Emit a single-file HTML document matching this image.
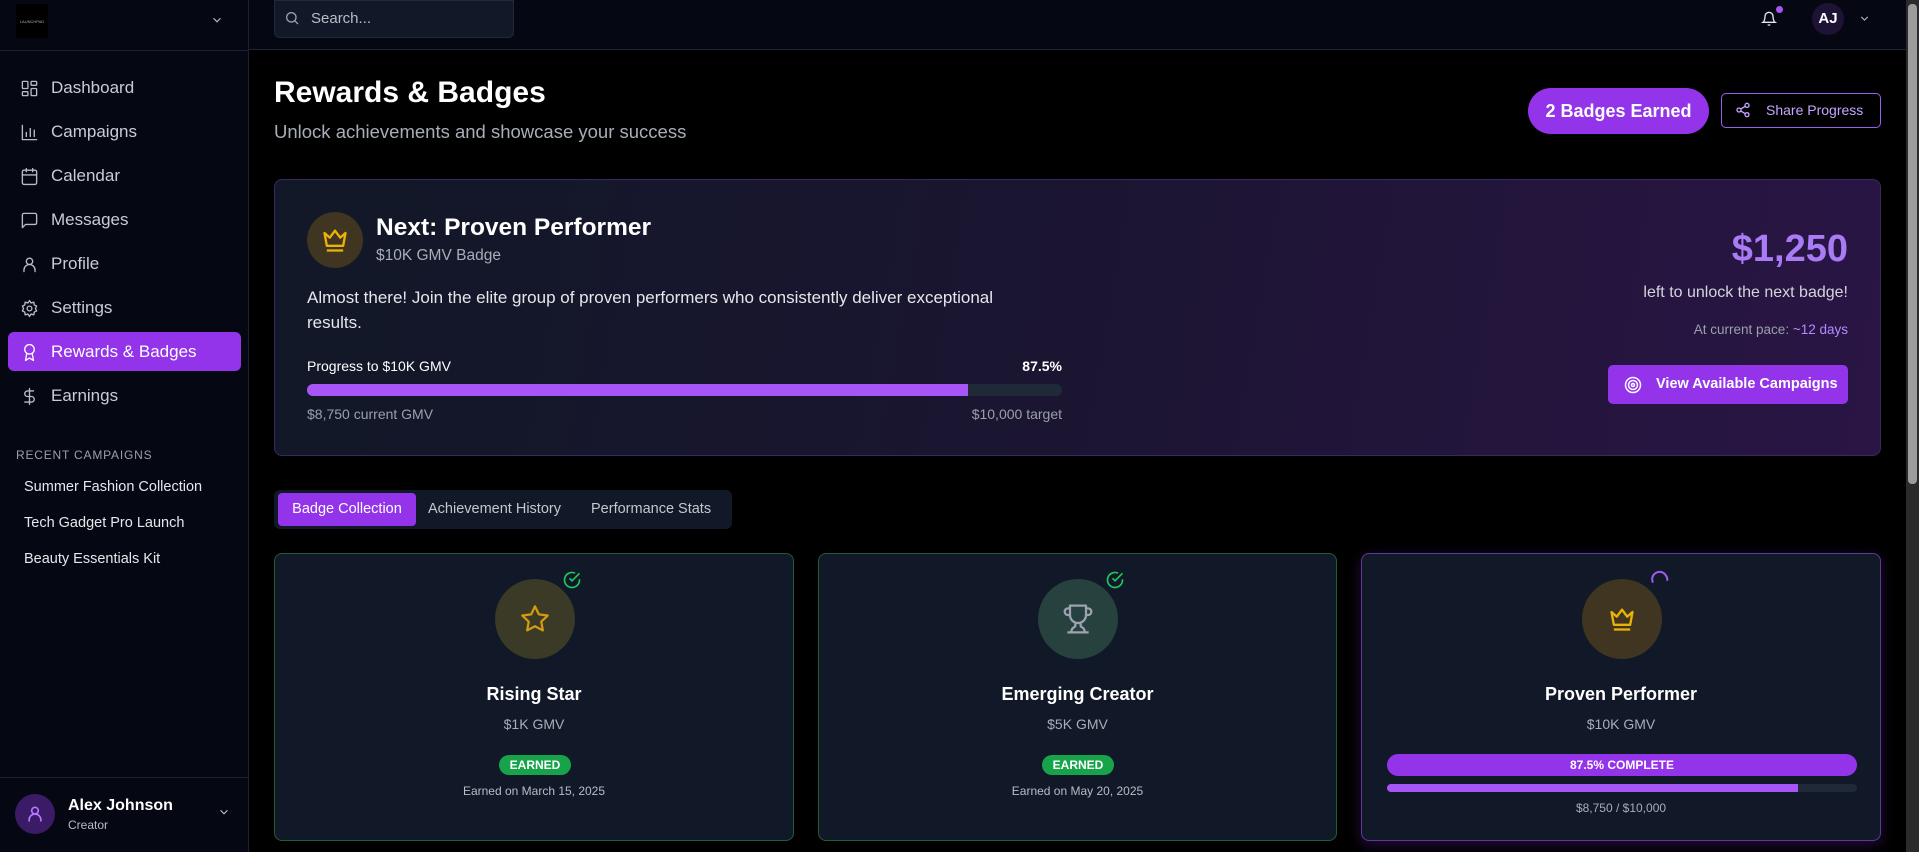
<!DOCTYPE html>
<html><head><meta charset="utf-8"><style>
*{box-sizing:border-box;margin:0;padding:0}
body{width:1919px;height:852px;overflow:hidden;background:#000;font-family:"Liberation Sans",sans-serif;color:#fff;position:relative}
.abs{position:absolute}
.side{left:0;top:0;width:249px;height:852px;background:#050812;border-right:1px solid #1c2130}
.nav{position:absolute;left:20px;display:flex;align-items:center;gap:12px;font-size:17px;color:#c9ccd4}
.nav svg{width:19px;height:19px;stroke:#b8bcc6;fill:none;stroke-width:1.7;stroke-linecap:round;stroke-linejoin:round}
.top{left:249px;top:0;width:1657px;height:50px;background:#050812;border-bottom:1px solid #1c2433}
.card{background:#111827;border:1px solid #1f5d36;border-radius:8px}
.t{position:absolute;white-space:nowrap}
.c{text-align:center;left:0;right:0}
</style></head><body>
<div class="abs side">
 <div class="abs" style="left:16px;top:4px;width:32px;height:34px;background:#000"><div style="font-size:4px;color:#aaa;margin-top:15px;text-align:center">LAUNCHPAD</div></div>
 <svg class="abs" style="left:210px;top:13px" width="14" height="14" viewBox="0 0 24 24" fill="none" stroke="#b8bcc6" stroke-width="2"><path d="M6 9l6 6 6-6"/></svg>
 <div class="abs" style="left:0;top:50px;width:249px;height:1px;background:#1c2130"></div>
 <div class="nav" style="top:78px"><svg viewBox="0 0 24 24"><rect x="3" y="3" width="7" height="9" rx="1"/><rect x="14" y="3" width="7" height="5" rx="1"/><rect x="14" y="12" width="7" height="9" rx="1"/><rect x="3" y="16" width="7" height="5" rx="1"/></svg>Dashboard</div>
 <div class="nav" style="top:122px"><svg viewBox="0 0 24 24"><path d="M3 3v18h18M8 17v-5M13 17V7M18 17v-8"/></svg>Campaigns</div>
 <div class="nav" style="top:166px"><svg viewBox="0 0 24 24"><rect x="3" y="4" width="18" height="18" rx="2"/><path d="M16 2v4M8 2v4M3 10h18"/></svg>Calendar</div>
 <div class="nav" style="top:210px"><svg viewBox="0 0 24 24"><path d="M21 15a2 2 0 0 1-2 2H7l-4 4V5a2 2 0 0 1 2-2h14a2 2 0 0 1 2 2z"/></svg>Messages</div>
 <div class="nav" style="top:254px"><svg viewBox="0 0 24 24"><circle cx="12" cy="8" r="4"/><path d="M5 21v-2a7 7 0 0 1 14 0v2"/></svg>Profile</div>
 <div class="nav" style="top:298px"><svg viewBox="0 0 24 24"><circle cx="12" cy="12" r="3"/><path d="M12 2l2 3 3.5-1 .5 3.5L21 9l-1.5 3L21 15l-3 1.5-.5 3.5-3.5-1-2 3-2-3-3.5 1-.5-3.5L3 15l1.5-3L3 9l3-1.5.5-3.5 3.5 1z"/></svg>Settings</div>
 <div class="abs" style="left:8px;top:332px;width:233px;height:39px;background:#9333ea;border-radius:6px"></div>
 <div class="nav" style="top:342px;color:#fff"><svg viewBox="0 0 24 24" style="stroke:#fff"><circle cx="12" cy="8" r="6"/><path d="M15.5 13.5L17 22l-5-3-5 3 1.5-8.5"/></svg>Rewards &amp; Badges</div>
 <div class="nav" style="top:386px"><svg viewBox="0 0 24 24"><path d="M12 2v20M17 5H9.5a3.5 3.5 0 0 0 0 7h5a3.5 3.5 0 0 1 0 7H6"/></svg>Earnings</div>
 <div class="t" style="left:16px;top:448px;font-size:12px;color:#9aa0ab;letter-spacing:.8px">RECENT CAMPAIGNS</div>
 <div class="t" style="left:24px;top:479px;font-size:14.5px;color:#e5e7eb">Summer Fashion Collection</div>
 <div class="t" style="left:24px;top:515px;font-size:14.5px;color:#e5e7eb">Tech Gadget Pro Launch</div>
 <div class="t" style="left:24px;top:551px;font-size:14.5px;color:#e5e7eb">Beauty Essentials Kit</div>
 <div class="abs" style="left:0;top:777px;width:249px;height:1px;background:#1c2130"></div>
 <div class="abs" style="left:15px;top:794px;width:40px;height:40px;border-radius:50%;background:#3b1a66"><svg style="margin:10px" width="20" height="20" viewBox="0 0 24 24" fill="none" stroke="#b478ff" stroke-width="2"><circle cx="12" cy="8" r="4"/><path d="M5 21v-2a7 7 0 0 1 14 0v2"/></svg></div>
 <div class="t" style="left:68px;top:797px;font-size:16px;font-weight:bold">Alex Johnson</div>
 <div class="t" style="left:68px;top:818px;font-size:12px;color:#b8bcc6">Creator</div>
 <svg class="abs" style="left:217px;top:805px" width="14" height="14" viewBox="0 0 24 24" fill="none" stroke="#b8bcc6" stroke-width="2"><path d="M6 9l6 6 6-6"/></svg>
</div>
<div class="abs top">
 <div class="abs" style="left:25px;top:0;width:240px;height:38px;background:#111827;border:1px solid #222a3a;border-radius:0 0 6px 6px"></div>
 <svg class="abs" style="left:35px;top:10px" width="16" height="16" viewBox="0 0 24 24" fill="none" stroke="#9aa0ab" stroke-width="2"><circle cx="11" cy="11" r="7"/><path d="M21 21l-5-5"/></svg>
 <div class="t" style="left:62px;top:10px;font-size:15px;color:#b8bcc6">Search...</div>
 <svg class="abs" style="left:1512px;top:10px" width="16" height="18" viewBox="0 0 24 24" fill="none" stroke="#e5e7eb" stroke-width="2"><path d="M6 8a6 6 0 0 1 12 0c0 7 3 9 3 9H3s3-2 3-9M10 21h4"/></svg>
 <div class="abs" style="left:1527px;top:6px;width:7px;height:7px;border-radius:50%;background:#a855f7"></div>
 <div class="abs" style="left:1563px;top:3px;width:32px;height:32px;border-radius:50%;background:#1e1334;font-size:15px;font-weight:bold;text-align:center;line-height:32px">AJ</div>
 <svg class="abs" style="left:1609px;top:12px" width="13" height="13" viewBox="0 0 24 24" fill="none" stroke="#b8bcc6" stroke-width="2"><path d="M6 9l6 6 6-6"/></svg>
</div>
<div class="abs" style="left:1906px;top:0;width:13px;height:852px;background:#2b2b2b"><div style="margin:4px 2px;width:9px;height:480px;background:#9c9c9c;border-radius:4px"></div></div>

<div class="t" style="left:274px;top:76px;font-size:30px;font-weight:bold">Rewards &amp; Badges</div>
<div class="t" style="left:274px;top:121px;font-size:18.5px;color:#a8adb8">Unlock achievements and showcase your success</div>
<div class="abs" style="left:1528px;top:88px;width:181px;height:46px;border-radius:23px;background:#9333ea;font-size:18px;font-weight:bold;text-align:center;line-height:46px">2 Badges Earned</div>
<div class="abs" style="left:1721px;top:93px;width:160px;height:35px;border:1.5px solid #9b5cf0;border-radius:5px;font-size:14px;color:#c4a6ff;line-height:32px;padding-left:44px">Share Progress</div>
<svg class="abs" style="left:1735px;top:102px" width="16" height="16" viewBox="0 0 24 24" fill="none" stroke="#c4a6ff" stroke-width="2"><circle cx="18" cy="5" r="3"/><circle cx="6" cy="12" r="3"/><circle cx="18" cy="19" r="3"/><path d="M8.6 13.5l6.8 4M15.4 6.5l-6.8 4"/></svg>

<div class="abs" style="left:274px;top:179px;width:1607px;height:277px;border-radius:8px;border:1px solid #3a2860;background:linear-gradient(100deg,#111827 0%,#1a1530 45%,#2a1545 100%)">
 <div class="abs" style="left:32px;top:32px;width:56px;height:56px;border-radius:50%;background:#3f3520"></div>
 <svg class="abs" style="left:46px;top:46px" width="28" height="28" viewBox="0 0 24 24" fill="none" stroke="#eab308" stroke-width="2" stroke-linejoin="round"><path d="M3 6l4.5 4L12 4l4.5 6L21 6l-2 11H5z M5 21h14"/></svg>
 <div class="t" style="left:101px;top:34px;font-size:24.5px;font-weight:bold">Next: Proven Performer</div>
 <div class="t" style="left:101px;top:67px;font-size:15.5px;color:#a8adb8">$10K GMV Badge</div>
 <div class="t" style="left:32px;top:106px;font-size:17px;line-height:24.5px;color:#e5e7eb;white-space:normal;width:740px">Almost there! Join the elite group of proven performers who consistently deliver exceptional results.</div>
 <div class="t" style="left:32px;top:178px;font-size:14px">Progress to $10K GMV</div>
 <div class="t" style="left:745px;top:178px;font-size:14px;font-weight:bold;width:42px;text-align:right">87.5%</div>
 <div class="abs" style="left:32px;top:204px;width:755px;height:12px;border-radius:6px;background:#1f2937;overflow:hidden"><div style="width:87.5%;height:100%;background:#a855f7"></div></div>
 <div class="t" style="left:32px;top:226px;font-size:14px;color:#9aa0ab">$8,750 current GMV</div>
 <div class="t" style="left:640px;top:226px;font-size:14px;color:#9aa0ab;width:147px;text-align:right">$10,000 target</div>
 <div class="t" style="right:32px;top:48px;font-size:38px;font-weight:bold;color:#a97cf5">$1,250</div>
 <div class="t" style="right:32px;top:104px;font-size:16px;color:#d4d4dc">left to unlock the next badge!</div>
 <div class="t" style="right:32px;top:142px;font-size:13.5px;color:#9aa0ab">At current pace: <span style="color:#b18cff">~12 days</span></div>
 <div class="abs" style="right:32px;top:185px;width:240px;height:39px;border-radius:5px;background:#9333ea;font-size:14.5px;font-weight:bold;line-height:39px;padding-left:48px">View Available Campaigns</div>
 <svg class="abs" style="left:1349px;top:196px" width="18" height="18" viewBox="0 0 24 24" fill="none" stroke="#fff" stroke-width="2"><circle cx="12" cy="12" r="10"/><circle cx="12" cy="12" r="6"/><circle cx="12" cy="12" r="2"/></svg>
</div>

<div class="abs" style="left:274px;top:490px;width:458px;height:39px;background:#111827;border-radius:6px"></div>
<div class="abs" style="left:278px;top:493px;width:138px;height:33px;background:#9333ea;border-radius:4px;font-size:14.5px;text-align:center;line-height:33px">Badge Collection</div>
<div class="t" style="left:428px;top:501px;font-size:14.5px;color:#c3c7cf">Achievement History</div>
<div class="t" style="left:591px;top:501px;font-size:14.5px;color:#c3c7cf">Performance Stats</div>

<div class="abs card" style="left:274px;top:553px;width:520px;height:288px">
 <div class="abs" style="left:220px;top:25px;width:80px;height:80px;border-radius:50%;background:#3a3a26"></div>
 <svg class="abs" style="left:244px;top:49px" width="32" height="32" viewBox="0 0 24 24" fill="none" stroke="#d49a10" stroke-width="1.7" stroke-linejoin="round"><path d="M12 2.5l2.9 6 6.6.9-4.8 4.6 1.2 6.5L12 17.4 6.1 20.5l1.2-6.5L2.5 9.4l6.6-.9z"/></svg>
 <svg class="abs" style="left:287px;top:16px" width="20" height="20" viewBox="0 0 24 24" fill="none" stroke="#22c55e" stroke-width="2"><path d="M21 11.1V12a9 9 0 1 1-5.3-8.2"/><path d="M21 4L12 13l-3-3"/></svg>
 <div class="t c" style="top:130px;font-size:18px;font-weight:bold">Rising Star</div>
 <div class="t c" style="top:162px;font-size:14px;color:#a8adb8">$1K GMV</div>
 <div class="abs" style="left:224px;top:201px;width:72px;height:20px;border-radius:10px;background:#16a34a;font-size:12px;font-weight:bold;text-align:center;line-height:20px">EARNED</div>
 <div class="t c" style="top:230px;font-size:12px;color:#b8bcc6">Earned on March 15, 2025</div>
</div>
<div class="abs card" style="left:818px;top:553px;width:519px;height:288px">
 <div class="abs" style="left:219px;top:25px;width:80px;height:80px;border-radius:50%;background:#27413f"></div>
 <svg class="abs" style="left:243px;top:49px" width="32" height="32" viewBox="0 0 24 24" fill="none" stroke="#9ca3af" stroke-width="1.7" stroke-linejoin="round"><path d="M6 9H4.5a2.5 2.5 0 0 1 0-5H6M18 9h1.5a2.5 2.5 0 0 0 0-5H18M4 22h16M10 14.7V17c0 .6-.5 1-1 1.2C7.8 18.8 7 20.2 7 22M14 14.7V17c0 .6.5 1 1 1.2 1.2.6 2 2 2 3.8M18 2H6v7a6 6 0 0 0 12 0z"/></svg>
 <svg class="abs" style="left:286px;top:16px" width="20" height="20" viewBox="0 0 24 24" fill="none" stroke="#22c55e" stroke-width="2"><path d="M21 11.1V12a9 9 0 1 1-5.3-8.2"/><path d="M21 4L12 13l-3-3"/></svg>
 <div class="t c" style="top:130px;font-size:18px;font-weight:bold">Emerging Creator</div>
 <div class="t c" style="top:162px;font-size:14px;color:#a8adb8">$5K GMV</div>
 <div class="abs" style="left:223px;top:201px;width:72px;height:20px;border-radius:10px;background:#16a34a;font-size:12px;font-weight:bold;text-align:center;line-height:20px">EARNED</div>
 <div class="t c" style="top:230px;font-size:12px;color:#b8bcc6">Earned on May 20, 2025</div>
</div>
<div class="abs card" style="left:1361px;top:553px;width:520px;height:288px;border-color:#5b3a9a;box-shadow:0 4px 14px rgba(147,51,234,.25)">
 <div class="abs" style="left:220px;top:25px;width:80px;height:80px;border-radius:50%;background:#3f3520"></div>
 <svg class="abs" style="left:246px;top:51px" width="28" height="28" viewBox="0 0 24 24" fill="none" stroke="#eab308" stroke-width="2" stroke-linejoin="round"><path d="M3 6l4.5 4L12 4l4.5 6L21 6l-2 11H5z M5 21h14"/></svg>
 <svg class="abs" style="left:287px;top:15px" width="22" height="22" viewBox="0 0 24 24" fill="none" stroke="#9b5cf0" stroke-width="2.2" stroke-linecap="round"><path d="M4 14A8 8 0 0 1 18 6.5 8 8 0 0 1 20 12"/></svg>
 <div class="t c" style="top:130px;font-size:18px;font-weight:bold">Proven Performer</div>
 <div class="t c" style="top:162px;font-size:14px;color:#a8adb8">$10K GMV</div>
 <div class="abs" style="left:25px;top:200px;width:470px;height:22px;border-radius:11px;background:#9333ea;font-size:12px;font-weight:bold;text-align:center;line-height:22px">87.5% COMPLETE</div>
 <div class="abs" style="left:25px;top:230px;width:470px;height:8px;border-radius:4px;background:#1f2937;overflow:hidden"><div style="width:87.5%;height:100%;background:#a855f7"></div></div>
 <div class="t c" style="top:247px;font-size:12px;color:#a8adb8">$8,750 / $10,000</div>
</div>
</body></html>
